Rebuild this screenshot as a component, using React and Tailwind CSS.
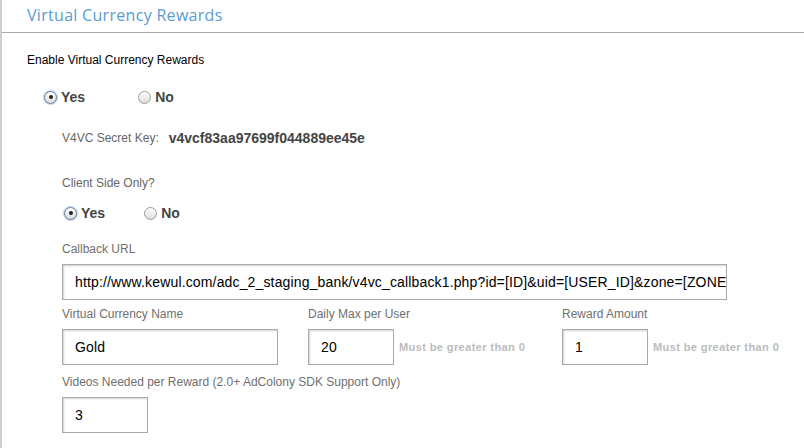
import React from "react";

const sans = { fontFamily: "'Liberation Sans', Arial, sans-serif" };

function Radio({ checked, label }) {
  return (
    <label className="flex items-center gap-[4px] h-5">
      <span
        className={`relative flex items-center justify-center w-[13px] h-[13px] rounded-full border bg-gradient-to-b from-white to-[#dcdcdc] ${
          checked ? "border-[#5d7a99] shadow-[0_0_1px_1px_rgba(110,160,220,0.45)]" : "border-[#9a9a9a]"
        }`}
      >
        {checked && <span className="w-[4px] h-[4px] rounded-full bg-[#222]" />}
      </span>
      <span className="text-[14px] font-bold text-[#444]">{label}</span>
    </label>
  );
}

function Field({ value, width, children }) {
  return (
    <div className="flex items-center">
      <div
        className={`${width} h-[36px] flex items-center pl-[12px] border border-[#aaaaaa] bg-white shadow-[inset_1px_1px_2px_rgba(0,0,0,0.18)] overflow-hidden whitespace-nowrap text-[14px] tracking-[0.15px] text-black`}
      >
        {value}
      </div>
      {children}
    </div>
  );
}

const Hint = () => (
  <span className="ml-[5px] text-[11px] tracking-[0.4px] font-bold text-[#bcbcbc]">Must be greater than 0</span>
);

export default function App() {
  return (
    <div className="w-[804px] h-[448px] bg-white border-l-2 border-[#cfcfcf] overflow-hidden" style={sans}>
      {/* Header */}
      <div className="h-[33px] border-b border-[#a9a9a9] pl-[25px] pt-[5px]">
        <h2
          className="text-[16px] leading-[20px] tracking-[0.3px] text-[#5b9bd1]"
          style={{ fontFamily: "'Open Sans', sans-serif" }}
        >
          Virtual Currency Rewards
        </h2>
      </div>

      <div className="pl-[25px]">
        <p className="mt-[19px] text-[12px] leading-[16px] text-black">Enable Virtual Currency Rewards</p>

        <div className="mt-[19px] flex pl-[17px]">
          <Radio checked label="Yes" />
          <div className="ml-[53px]">
            <Radio label="No" />
          </div>
        </div>

        <div className="pl-[35px]">
          <div className="mt-[21px] flex items-center h-5">
            <span className="text-[12px] text-[#666]">V4VC Secret Key:</span>
            <span className="ml-[10px] text-[14px] font-bold text-[#444]">v4vcf83aa97699f044889ee45e</span>
          </div>

          <p className="mt-[27px] text-[12px] leading-[16px] text-[#666]">Client Side Only?</p>

          <div className="mt-[12px] flex pl-[2px]">
            <Radio checked label="Yes" />
            <div className="ml-[39px]">
              <Radio label="No" />
            </div>
          </div>

          <p className="mt-[18px] text-[12px] leading-[16px] text-[#6f6f6f]">Callback URL</p>
          <div className="mt-[7px]">
            <Field
              width="w-[665px]"
              value="http://www.kewul.com/adc_2_staging_bank/v4vc_callback1.php?id=[ID]&uid=[USER_ID]&zone=[ZONE]"
            />
          </div>

          <div className="mt-[6px] flex text-[12px] leading-[16px] text-[#6f6f6f]">
            <span className="w-[246px]">Virtual Currency Name</span>
            <span className="w-[254px]">Daily Max per User</span>
            <span>Reward Amount</span>
          </div>
          <div className="mt-[7px] flex">
            <div className="w-[246px]">
              <Field width="w-[216px]" value="Gold" />
            </div>
            <div className="w-[254px]">
              <Field width="w-[86px]" value="20">
                <Hint />
              </Field>
            </div>
            <Field width="w-[86px]" value="1">
              <Hint />
            </Field>
          </div>

          <p className="mt-[9px] text-[12px] leading-[16px] text-[#6f6f6f]">
            Videos Needed per Reward (2.0+ AdColony SDK Support Only)
          </p>
          <div className="mt-[7px]">
            <Field width="w-[86px]" value="3" />
          </div>
        </div>
      </div>
    </div>
  );
}
